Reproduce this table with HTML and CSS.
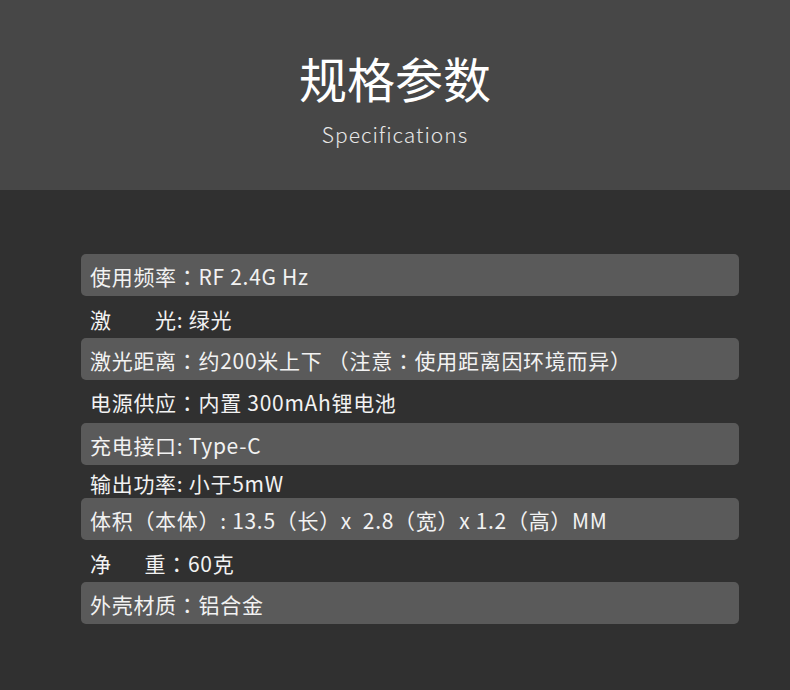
FILE: index.html
```html
<!DOCTYPE html>
<html lang="zh-CN">
<head>
<meta charset="utf-8">
<title>规格参数</title>
<link rel="stylesheet" href="styles.css">
</head>
<body>
<header class="hero">
  <h1 class="hero-title">规格参数</h1>
  <p class="hero-sub">Specifications</p>
</header>
<main class="specs">
  <ul class="spec-list">
    <li class="row row-bar">使用频率<span class="c">：</span>RF 2.4G Hz</li>
    <li class="row">激　　光: 绿光</li>
    <li class="row row-bar">激光距离<span class="c">：</span>约200米上下 （注意<span class="c">：</span>使用距离因环境而异）</li>
    <li class="row row-tall">电源供应<span class="c">：</span>内置 300mAh锂电池</li>
    <li class="row row-bar">充电接口: Type-C</li>
    <li class="row row-short">输出功率: 小于5mW</li>
    <li class="row row-bar">体积（本体）: 13.5（长）x&nbsp; 2.8（宽）x 1.2（高）MM</li>
    <li class="row">净　&ensp;重<span class="c">：</span>60克</li>
    <li class="row row-bar">外壳材质<span class="c">：</span>铝合金</li>
  </ul>
</main>
</body>
</html>
```
FILE: styles.css
```css
* { box-sizing: border-box; }
html, body { margin: 0; padding: 0; }
body {
  width: 790px;
  height: 690px;
  background: #303030;
  font-family: "Noto Sans CJK SC", "Noto Sans", sans-serif;
  color: #f2f2f2;
  overflow: hidden;
}
.hero {
  height: 190px;
  background: #474747;
  display: flex;
  flex-direction: column;
  align-items: center;
  padding-top: 45px;
}
.hero-title {
  margin: 0;
  font-size: 48px;
  line-height: 64px;
  font-weight: 400;
  color: #ffffff;
}
.hero-sub {
  margin: 11px 0 0;
  font-size: 21px;
  line-height: 28px;
  font-weight: 300;
  letter-spacing: 1px;
  color: #e6e6e6;
}
.specs {
  padding: 64px 0 0 81px;
}
.spec-list {
  list-style: none;
  margin: 0;
  padding: 0;
  width: 658px;
  display: flex;
  flex-direction: column;
}
.row {
  height: 42px;
  display: flex;
  align-items: center;
  padding: 3px 0 0 9px;
  font-size: 21px;
  line-height: 28px;
  letter-spacing: 0.7px;
  white-space: pre;
}
.row-bar {
  background: #5a5a5a;
  border-radius: 5px;
  padding-top: 2px;
}
.row-tall {
  height: 43px;
  padding-top: 1px;
}
.row-short {
  height: 33px;
  padding-top: 2px;
}
.c {
  font-family: "Noto Sans CJK TC", "Noto Sans CJK SC", sans-serif;
}
```
